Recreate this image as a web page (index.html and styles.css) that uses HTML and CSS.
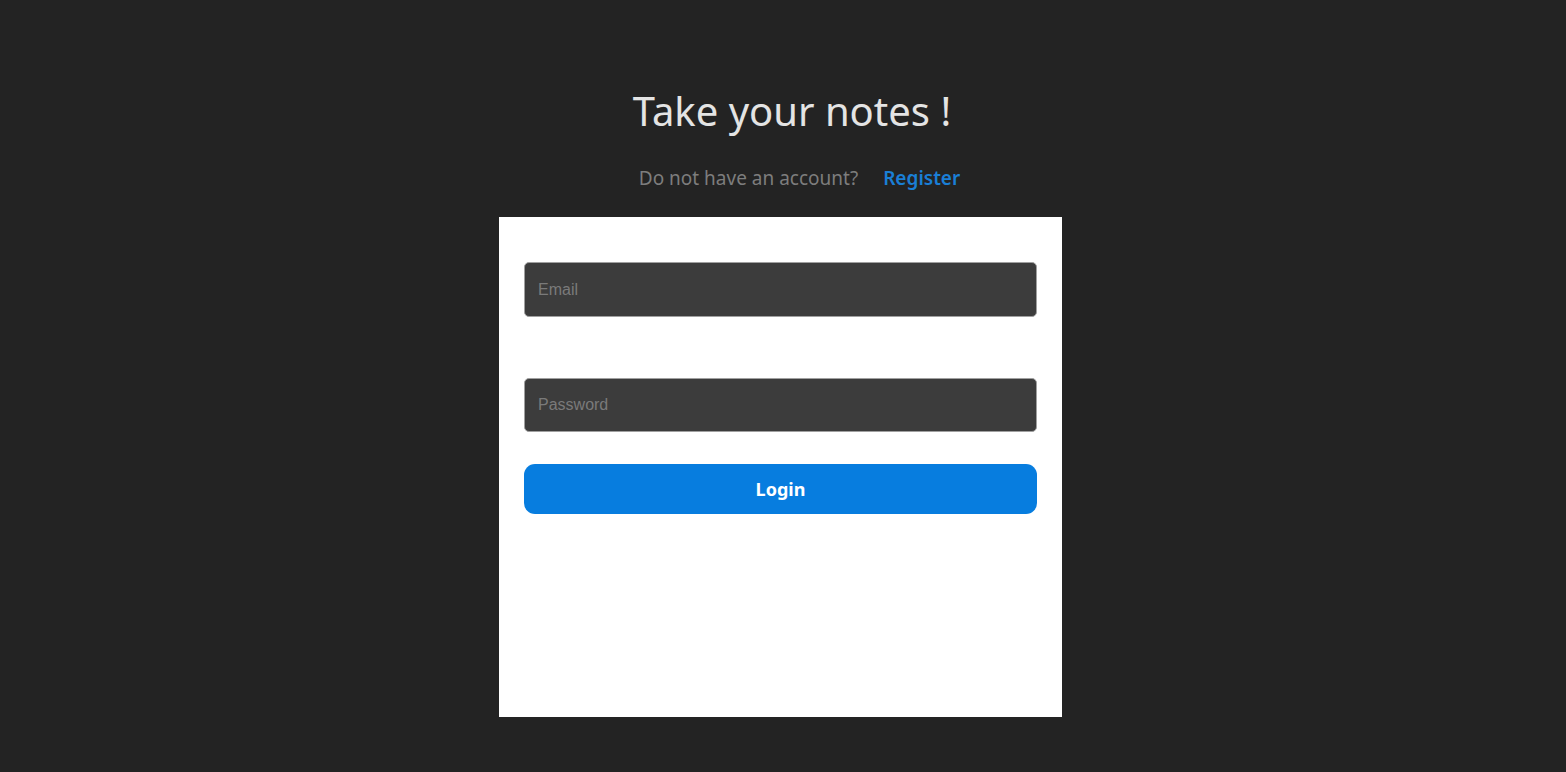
FILE: index.html
```html
<!DOCTYPE html>
<html>
<head>
<meta charset="utf-8">
<title>Take your notes</title>
<link rel="stylesheet" href="styles.css">
</head>
<body>
<main class="page">
  <h1 class="title">Take your notes !</h1>
  <p class="switch">
    <span class="switch-text">Do not have an account?</span>
    <a class="switch-link" href="#">Register</a>
  </p>
  <form class="card">
    <input class="field" type="email" placeholder="Email">
    <input class="field field-pass" type="password" placeholder="Password">
    <button class="btn" type="button">Login</button>
  </form>
</main>
</body>
</html>
```
FILE: styles.css
```css
html, body {
  margin: 0;
  padding: 0;
  height: 100%;
  background: #232323;
}
body {
  font-family: "Noto Sans", "Open Sans", sans-serif;
}
.page {
  display: flex;
  flex-direction: column;
  align-items: center;
  padding-top: 83px;
  padding-right: 5px;
}
.title {
  margin: 0;
  padding-left: 23px;
  font-size: 40px;
  font-weight: 400;
  color: #e4e4e4;
  line-height: 56px;
}
.switch {
  margin: 24px 0 0;
  padding-left: 38px;
  display: flex;
  gap: 25px;
  font-size: 19px;
  line-height: 30px;
}
.switch-text {
  color: #7d7d7d;
}
.switch-link {
  color: #1a7fd6;
  font-weight: 600;
  text-decoration: none;
}
.card {
  margin-top: 24px;
  width: 563px;
  height: 500px;
  box-sizing: border-box;
  background: #ffffff;
  padding: 45px 25px 0;
  display: flex;
  flex-direction: column;
}
.field {
  height: 55px;
  box-sizing: border-box;
  background: #3c3c3c;
  border: 1px solid #a0a0a0;
  border-radius: 5px;
  padding: 0 13px;
  font-family: "Liberation Sans", Arial, sans-serif;
  font-size: 16px;
  color: #ddd;
  outline: none;
}
.field::placeholder {
  color: #7a7a7a;
}
.field-pass {
  margin-top: 61px;
  height: 54px;
}
.btn {
  margin-top: 32px;
  height: 50px;
  border: none;
  border-radius: 11px;
  background: #077ddf;
  color: #ffffff;
  font-family: "Noto Sans", "Open Sans", sans-serif;
  font-size: 18px;
  font-weight: 700;
  cursor: pointer;
}
```
